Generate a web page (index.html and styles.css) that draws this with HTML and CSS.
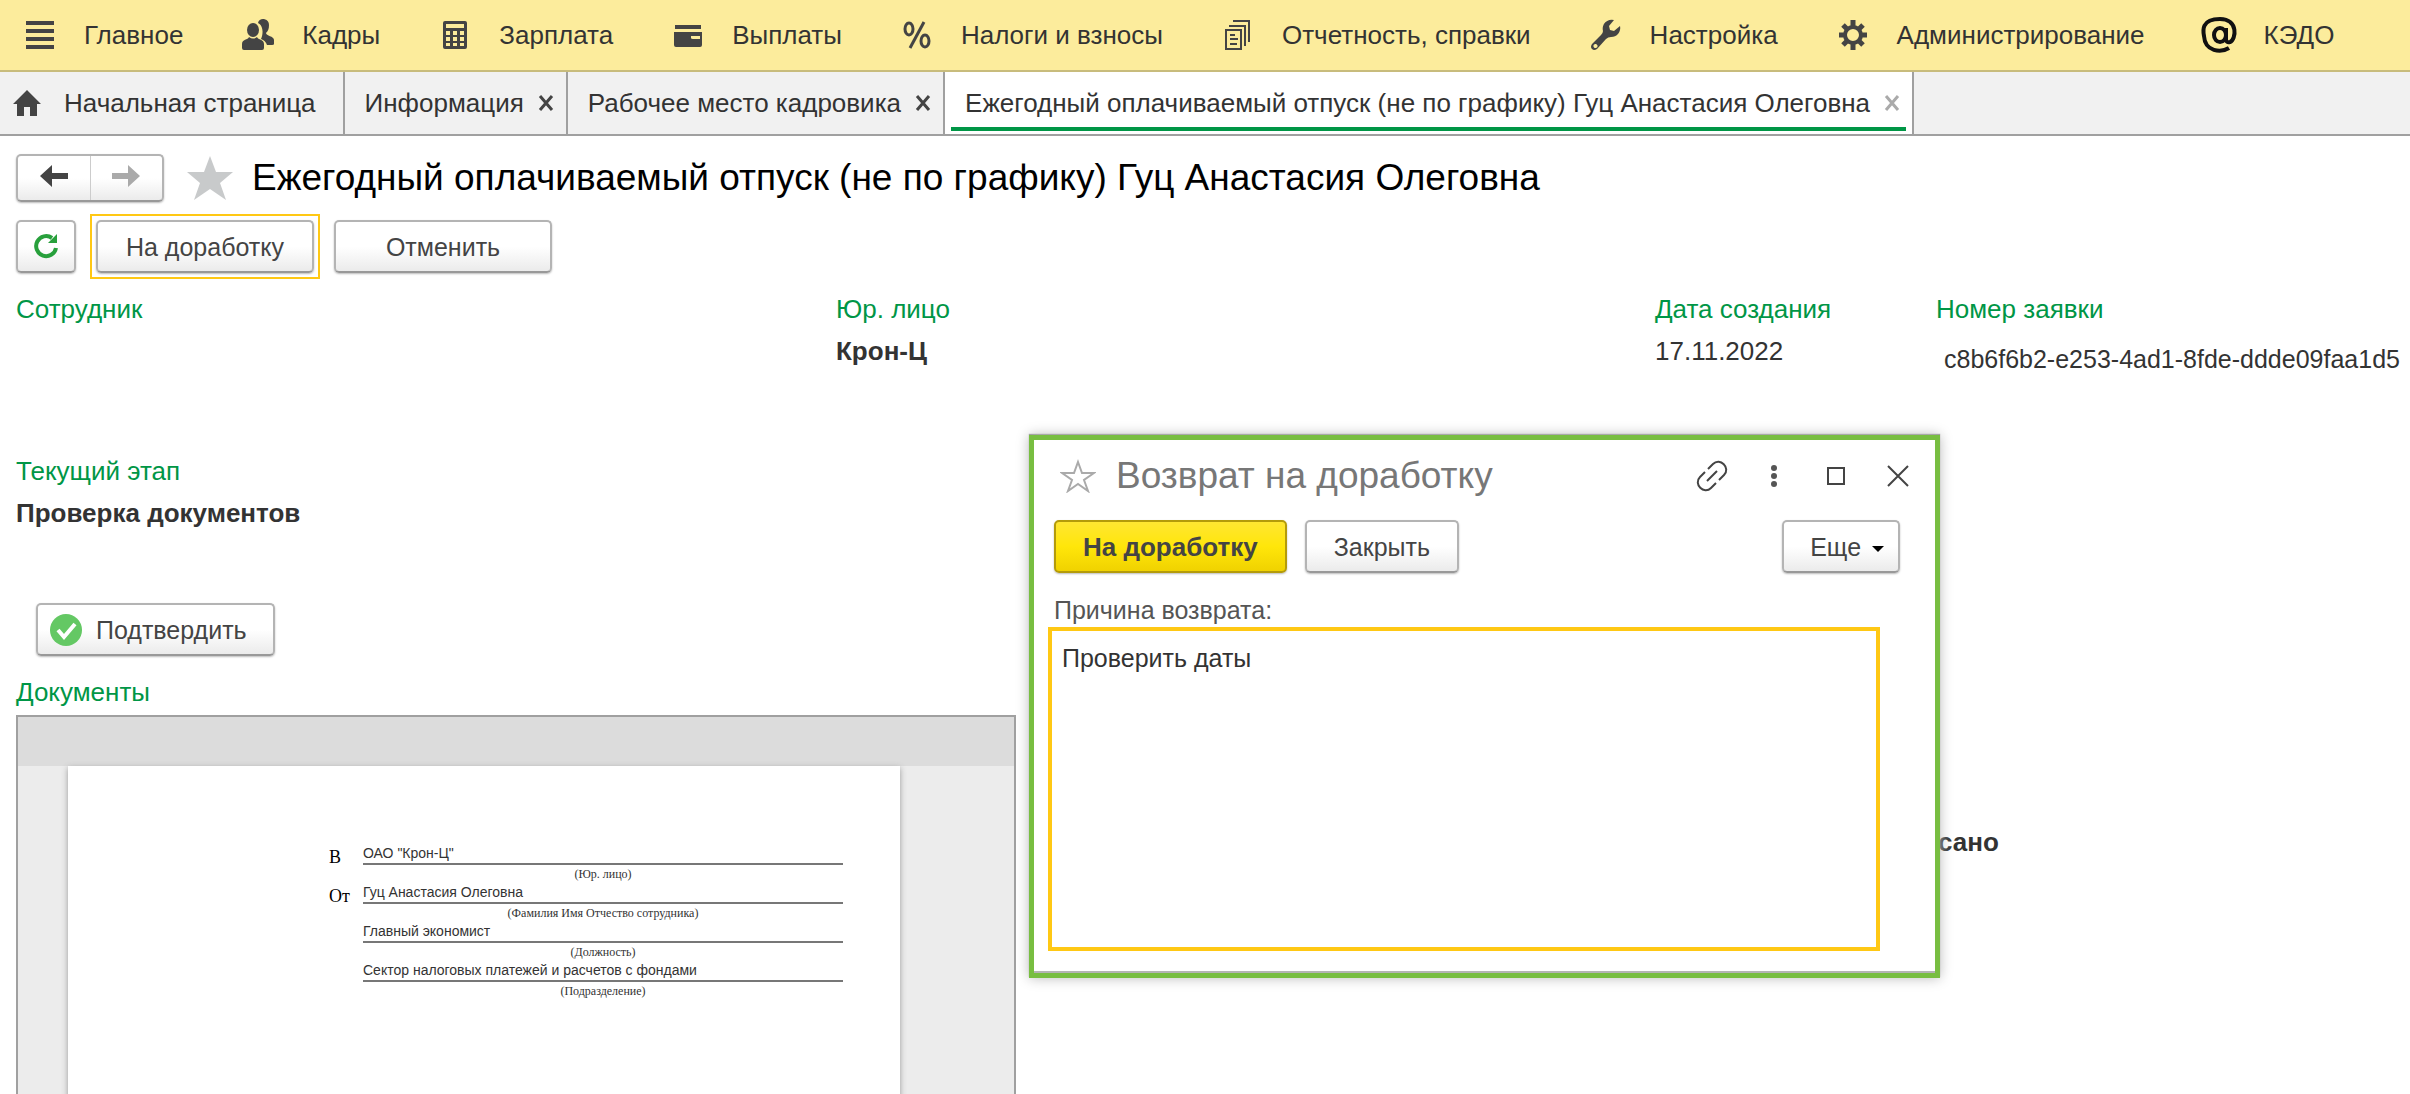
FILE: index.html
```html
<!DOCTYPE html>
<html lang="ru">
<head>
    <meta charset="UTF-8">
    <meta name="viewport" content="width=device-width, initial-scale=1.0">
    <title>Ежегодный оплачиваемый отпуск (не по графику)</title>
    <link rel="stylesheet" href="styles.css">
</head>
<body>
    <nav class="menu">
        <a href="#">
            <svg class="icone" viewBox="0 0 32 32"><path d="M2 2h28v4H2zM2 10h28v4H2zM2 18h28v4H2zM2 26h28v4H2z"/></svg>
            Главное
        </a>
        <a href="#">
            <svg class="icone" viewBox="0 0 32 32"><path d="M16 4c1-6 11-5 11 2 0 4-1 6-3 8 0 3 8 3 8 7v4q0 1-2 1h-5c-1-3-3-5-6-6 2-4 3-13-3-16z"/><ellipse cx="11" cy="11" rx="6" ry="7"/><path d="M7 18q4 3 8 0c1 3 7 2 7 7v4q0 2-2 2H2q-2 0-2-2v-4c0-5 6-4 7-7z"/></svg>
            Кадры
        </a>
        <a href="#">
            <svg class="icone" viewBox="0 0 32 32"><path fill-rule="evenodd" d="M6 2h20q2 0 2 2v24q0 2-2 2H6q-2 0-2-2V4q0-2 2-2zM7 5v4h18V5zM7 12v4h4v-4zM14 12v4h4v-4zM21 12v4h4v-4zM7 18v4h4v-4zM14 18v4h4v-4zM21 18v4h4v-4zM7 24v3h4v-3zM14 24v3h4v-3zM21 24v3h4v-3z"/></svg>
            Зарплата
        </a>
        <a href="#">
            <svg class="icone" viewBox="0 0 32 32"><path fill-rule="evenodd" d="M3 6h26v4H3zM2 13h28v13q0 2-2 2H4q-2 0-2-2zM19 17v2q0 1 2 1h7v-3z"/></svg>
            Выплаты
        </a>
        <a href="#">
            <svg class="icone porcento" viewBox="0 0 32 32"><ellipse cx="8" cy="10" rx="4" ry="6"/><ellipse cx="24" cy="22" rx="4" ry="6"/><path d="M23 3 9 29"/></svg>
            Налоги и взносы
        </a>
        <a href="#">
            <svg class="icone fina" viewBox="0 0 32 32"><path d="M4 11h15v19H4zM7 7h16v20M11 2h16v21M8 16h5M8 20h8M8 25h7"/></svg>
            Отчетность, справки
        </a>
        <a href="#">
            <svg class="icone" viewBox="0 0 32 32"><path fill-rule="evenodd" d="M24 1a9 9 0 0 0-11 11q0 2-2 4l-9 9q-2 3 0 5t5 0l9-10q2-2 5-2A9 9 0 0 0 30 7l-6 5-4-1-1-4zM5 25a2 2 0 1 0 1 4 2 2 0 0 0-1-4z"/></svg>
            Настройка
        </a>
        <a href="#">
            <svg class="icone linha" viewBox="0 0 32 32"><circle cx="16" cy="16" r="8"/><path class="dentes" d="M16 1v6M16 25v6M2 16h5M25 16h5M6 6l4 4M22 22l4 4M26 6l-4 4M10 22l-4 4"/></svg>
            Администрирование
        </a>
        <a href="#">
            <svg class="icone arroba" viewBox="0 0 32 32"><ellipse cx="16" cy="16" rx="6" ry="7"/><path d="M22 9v11q0 4 4 3c6-2 9-23-10-23S-1 12 0 17c1 16 17 17 25 12"/></svg>
            КЭДО
        </a>
    </nav>

    <div class="abas">
        <a class="aba inicio" href="#">
            <svg viewBox="0 0 28 26"><path d="M14 0 28 14h-4v12h-7v-9h-6v9H4V14H0z"/></svg>
            Начальная страница
        </a>
        <div class="aba"><a href="#">Информация</a><button class="fechar" aria-label="Закрыть"><svg viewBox="0 0 16 16"><path d="M2 1l12 14M14 1L2 15"/></svg></button></div>
        <div class="aba"><a href="#">Рабочее место кадровика</a><button class="fechar" aria-label="Закрыть"><svg viewBox="0 0 16 16"><path d="M2 1l12 14M14 1L2 15"/></svg></button></div>
        <div class="aba ativa"><a href="#">Ежегодный оплачиваемый отпуск (не по графику) Гуц Анастасия Олеговна</a><button class="fechar" aria-label="Закрыть"><svg viewBox="0 0 16 16"><path d="M2 1l12 14M14 1L2 15"/></svg></button></div>
    </div>

    <main>
        <div class="cabecalho">
            <div class="navegacao">
                <button aria-label="Назад"><svg viewBox="0 0 28 22"><path d="M0 11 12 0v8h16v6H12v8z"/></svg></button>
                <button aria-label="Вперед" class="apagado"><svg viewBox="0 0 28 22"><path d="M28 11 16 0v8H0v6h16v8z"/></svg></button>
            </div>
            <svg class="estrela" viewBox="0 0 48 44"><path d="M24 0l6 16h17L34 27l6 17-16-11L8 44l6-17L1 16h17z"/></svg>
            <h1>Ежегодный оплачиваемый отпуск (не по графику) Гуц Анастасия Олеговна</h1>
        </div>

        <div class="acoes">
            <button class="botao atualizar" aria-label="Обновить"><svg viewBox="0 0 26 26"><path class="arco" d="M19 5a10 10 0 1 0 4 10"/><path class="seta" d="M24 1v9H15z"/></svg></button>
            <div class="foco"><button class="botao largo">На доработку</button></div>
            <button class="botao largo">Отменить</button>
        </div>

        <div class="dados">
            <div class="campo">
                <h2>Сотрудник</h2>
            </div>
            <div class="campo">
                <h2>Юр. лицо</h2>
                <p><b>Крон-Ц</b></p>
            </div>
            <div class="campo">
                <h2>Дата создания</h2>
                <p>17.11.2022</p>
            </div>
            <div class="campo">
                <h2>Номер заявки</h2>
                <p class="numero">c8b6f6b2-e253-4ad1-8fde-ddde09faa1d5</p>
            </div>
        </div>

        <div class="campo etapa">
            <h2>Текущий этап</h2>
            <p><b>Проверка документов</b></p>
        </div>

        <button class="botao confirmar">
            <svg viewBox="0 0 32 32"><circle cx="16" cy="16" r="16"/><path d="M8 16l6 7 11-13"/></svg>
            Подтвердить
        </button>

        <h2 class="titulo-docs">Документы</h2>
        <div class="documentos">
            <div class="visor">
                <div class="folha">
                    <div class="formulario">
                        <span class="prefixo">В</span>
                        <div><p class="valor">ОАО "Крон-Ц"</p><p class="legenda">(Юр. лицо)</p></div>
                        <span class="prefixo">От</span>
                        <div><p class="valor">Гуц Анастасия Олеговна</p><p class="legenda">(Фамилия Имя Отчество сотрудника)</p></div>
                        <span></span>
                        <div><p class="valor">Главный экономист</p><p class="legenda">(Должность)</p></div>
                        <span></span>
                        <div><p class="valor">Сектор налоговых платежей и расчетов с фондами</p><p class="legenda">(Подразделение)</p></div>
                    </div>
                </div>
            </div>
            <b class="situacao">сано</b>
        </div>
    </main>

    <section class="janela" role="dialog" aria-labelledby="titulo-janela">
        <div class="topo">
            <svg class="contorno" viewBox="0 0 36 34"><path d="M18 3l4 11h12l-10 7 4 11-10-7-10 7 4-11L2 14h12z"/></svg>
            <h2 id="titulo-janela">Возврат на доработку</h2>
            <button aria-label="Ссылка"><svg viewBox="0 0 32 32"><path d="M12 9l5-5c7-7 18 4 11 11l-5 5M9 12l-5 5c-7 7 4 18 11 11l5-5M11 21l10-10"/></svg></button>
            <button aria-label="Меню"><svg viewBox="0 0 32 32"><g class="cheio"><circle cx="16" cy="8" r="3"/><circle cx="16" cy="16" r="3"/><circle cx="16" cy="24" r="3"/></g></svg></button>
            <button aria-label="Развернуть"><svg viewBox="0 0 32 32"><path d="M8 8h16v16H8z"/></svg></button>
            <button aria-label="Закрыть"><svg viewBox="0 0 32 32"><path d="M6 6l20 20M26 6L6 26"/></svg></button>
        </div>
        <div class="comandos">
            <button class="botao amarelo">На доработку</button>
            <button class="botao">Закрыть</button>
            <button class="botao mais">Еще <svg viewBox="0 0 12 6"><path d="M0 0h12L6 6z"/></svg></button>
        </div>
        <label for="motivo">Причина возврата:</label>
        <textarea id="motivo">Проверить даты</textarea>
    </section>
</body>
</html>
```

FILE: styles.css
```css
* {
    margin: 0;
    padding: 0;
    box-sizing: border-box;
}

body {
    position: relative;
    display: flex;
    flex-direction: column;
    height: 100vh;
    overflow: hidden;
    background-color: #fff;
    color: #333;
    font-family: "Liberation Sans", Arial, sans-serif;
    font-size: 26px;
    line-height: 30px;
}

a {
    color: inherit;
    text-decoration: none;
    white-space: nowrap;
}

button, textarea {
    font: inherit;
    font-size: 25px;
    color: inherit;
}

button {
    border: none;
    background: none;
    cursor: pointer;
    white-space: nowrap;
}

h1, h2 {
    font-weight: normal;
}

h2 {
    font-size: 26px;
    color: #009646;
}

.menu {
    display: flex;
    gap: 59px;
    height: 72px;
    padding-left: 24px;
    background-color: #fcec9c;
    border-bottom: 2px solid #c8bc7c;
}

.menu a {
    display: flex;
    align-items: center;
    gap: 28px;
}

.icone {
    width: 32px;
    height: 32px;
    fill: #444;
}

.linha, .fina, .porcento, .arroba {
    fill: none;
    stroke: #444;
    stroke-width: 4;
}

.fina {
    stroke-width: 2;
}

.porcento {
    stroke-width: 3;
}

.dentes {
    stroke-width: 5;
}

.arroba {
    stroke: #111;
    overflow: visible;
}

.abas {
    display: flex;
    height: 64px;
    background-color: #f1f1f1;
    border-bottom: 2px solid #a0a0a0;
}

.aba {
    display: flex;
    align-items: center;
    gap: 14px;
    padding: 0 12px 0 20px;
    border-right: 2px solid #a0a0a0;
}

.inicio {
    gap: 23px;
    padding: 0 27px 0 13px;
}

.inicio svg {
    width: 28px;
    height: 26px;
    fill: #444;
}

.ativa {
    background: linear-gradient(#009646, #009646) 6px 55px / calc(100% - 12px) 4px no-repeat #fff;
}

.fechar {
    display: flex;
}

.fechar svg {
    width: 16px;
    height: 16px;
    fill: none;
    stroke: #444;
    stroke-width: 3;
}

.ativa .fechar svg {
    stroke: #aaa;
}

main {
    display: flex;
    flex-direction: column;
    flex: 1;
    padding: 17px 0 0 16px;
}

.cabecalho {
    display: flex;
    align-items: center;
    gap: 22px;
}

.navegacao, .botao {
    background: linear-gradient(#fff 50%, #ebebeb);
    border: 2px solid #b4b4b4;
    border-bottom-color: #999;
    border-radius: 5px;
    box-shadow: 0 1px 2px #bbb;
}

.navegacao {
    display: flex;
    width: 148px;
    height: 48px;
}

.navegacao button {
    flex: 1;
}

.navegacao button + button {
    border-left: 1px solid #ccc;
}

.navegacao svg {
    width: 28px;
    height: 22px;
    fill: #444;
}

.navegacao .apagado svg {
    fill: #aaa;
}

.estrela {
    width: 48px;
    height: 44px;
    fill: #c8cacb;
}

h1 {
    margin-left: -4px;
    font-size: 37px;
    line-height: 49px;
    color: #000;
}

.botao {
    height: 53px;
    padding: 0 27px;
    color: #444;
}

.acoes {
    display: flex;
    align-items: center;
    gap: 14px;
    margin-top: 12px;
}

.atualizar {
    width: 60px;
    padding: 0;
}

.atualizar svg {
    width: 26px;
    height: 26px;
    margin-bottom: 4px;
    vertical-align: middle;
}

.arco {
    fill: none;
    stroke: #28a03c;
    stroke-width: 4;
}

.seta {
    fill: #28a03c;
}

.foco {
    padding: 4px;
    border: 2px solid #ffc814;
}

.largo {
    width: 218px;
    padding: 0;
}

.dados {
    display: grid;
    grid-template-columns: 820fr 819fr 281fr 474fr;
    height: 162px;
    margin-top: 15px;
}

.campo h2 {
    margin-bottom: 12px;
}

.numero {
    padding: 8px 0 0 8px;
    font-size: 25px;
}

.etapa {
    height: 147px;
}

.confirmar {
    display: flex;
    align-items: center;
    align-self: flex-start;
    gap: 14px;
    margin-left: 20px;
    padding: 0 26px 0 12px;
}

.confirmar svg {
    width: 32px;
    height: 32px;
    fill: #64c864;
}

.confirmar path {
    fill: none;
    stroke: #fff;
    stroke-width: 4;
}

.titulo-docs {
    margin: 21px 0 8px;
}

.documentos {
    display: grid;
    grid-template-columns: 1000fr 922fr 472fr;
    flex: 1;
}

.visor {
    padding: 0 114px 0 50px;
    background: linear-gradient(#dcdcdc 49px, #ececec 49px);
    border: 2px solid #a0a0a0;
    border-bottom: none;
}

.folha {
    height: 100%;
    margin-top: 49px;
    padding: 77px 57px 0 261px;
    background-color: #fff;
    box-shadow: 0 2px 6px #999;
}

.formulario {
    display: grid;
    grid-template-columns: 34px 1fr;
    font-size: 14px;
    line-height: 20px;
    color: #333;
}

.prefixo {
    padding-top: 4px;
    font-family: "Liberation Serif", serif;
    font-size: 18px;
    color: #000;
}

.valor {
    border-bottom: 2px solid #777;
}

.legenda {
    padding-top: 2px;
    font-family: "Liberation Serif", serif;
    font-size: 12px;
    line-height: 15px;
    text-align: center;
}

.situacao {
    grid-column: 3;
    padding-top: 112px;
}

/* окно поверх формы */
.janela {
    position: absolute;
    top: 435px;
    right: 470px;
    display: flex;
    flex-direction: column;
    width: 911px;
    padding: 16px 35px 22px 14px;
    background-color: #fff;
    border: 5px solid #78be41;
    box-shadow: 0 0 12px #bbb, 0 -1px 1px #999, inset 0 -2px #b4b4b4;
}

.topo {
    display: flex;
    align-items: center;
    gap: 30px;
    height: 40px;
    margin: 0 -14px 0 12px;
}

.topo h2 {
    flex: 1;
    margin-left: -10px;
    font-size: 37px;
    color: #777;
}

.contorno {
    width: 36px;
    height: 34px;
    fill: none;
    stroke: #aaa;
    stroke-width: 2;
}

.topo button, .topo button svg {
    display: block;
    width: 32px;
    height: 32px;
}

.topo button svg {
    fill: none;
    stroke: #444;
    stroke-width: 2;
}

.topo .cheio {
    fill: #555;
    stroke: none;
}

.comandos {
    display: flex;
    gap: 18px;
    margin: 24px 0 22px 6px;
}

.amarelo {
    background: linear-gradient(#ffe632, #ffe60a 50%, #f0d200);
    border-color: #b49b0a;
    font-size: 26px;
    font-weight: bold;
}

.mais {
    margin-left: auto;
    padding: 0 14px 0 26px;
}

.mais svg {
    width: 12px;
    height: 6px;
    margin-left: 4px;
    vertical-align: middle;
}

.janela label {
    margin-bottom: 2px;
    padding-left: 6px;
    font-size: 25px;
    color: #555;
}

textarea {
    height: 324px;
    margin-right: 20px;
    padding: 12px 10px;
    border: 4px solid #ffc814;
    outline: none;
    resize: none;
}
```
